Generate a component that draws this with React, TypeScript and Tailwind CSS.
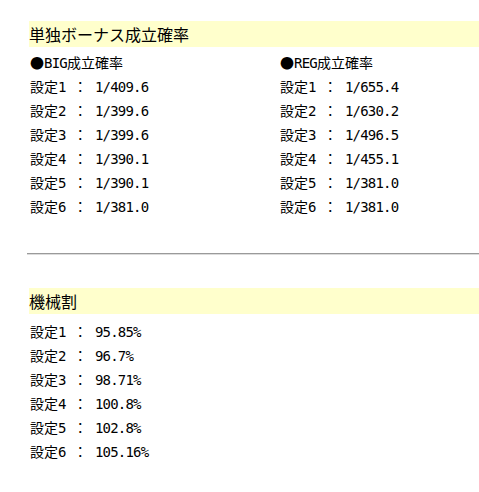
const bigRates = ["1/409.6", "1/399.6", "1/399.6", "1/390.1", "1/390.1", "1/381.0"];
const regRates = ["1/655.4", "1/630.2", "1/496.5", "1/455.1", "1/381.0", "1/381.0"];
const payouts = ["95.85%", "96.7%", "98.71%", "100.8%", "102.8%", "105.16%"];

// ascii runs get a narrow monospace, everything else the CJK face
function Txt({ s }: { s: string }) {
  const runs = s.match(/[\x00-\x7f]+|[^\x00-\x7f]+/g) ?? [];
  return (
    <div className="h-[24px] whitespace-nowrap">
      {runs.map((r, i) =>
        /^[\x00-\x7f]+$/.test(r) ? (
          <span key={i} className="font-['DejaVu_Sans_Mono'] tracking-[-0.8px] whitespace-pre">
            {r}
          </span>
        ) : (
          <span key={i}>{r}</span>
        )
      )}
    </div>
  );
}

function RateList({ title, values, className }: { title: string; values: string[]; className?: string }) {
  return (
    <div className={className}>
      <Txt s={title} />
      {values.map((v, i) => (
        <Txt key={i} s={`設定${i + 1} ： ${v}`} />
      ))}
    </div>
  );
}

export default function App() {
  return (
    <div className="min-h-[492px] bg-white pl-[29px] pt-[21px] text-black font-['Noto_Sans_CJK_JP',sans-serif]">
      <h2 className="h-[26px] bg-[#ffffcc] text-[16px] leading-[26px] font-normal">
        単独ボーナス成立確率
      </h2>
      <div className="mt-[3px] flex pl-[1px] text-[14px] leading-[24px]">
        <RateList className="w-[250px] shrink-0" title="●BIG成立確率" values={bigRates} />
        <RateList title="●REG成立確率" values={regRates} />
      </div>

      <div className="-ml-[2px] mt-[35px] h-[2px] border-t border-b border-t-[#9a9a9a] border-b-[#dcdcdc]" />

      <h2 className="mt-[33px] h-[26px] bg-[#ffffcc] text-[16px] leading-[26px] font-normal">
        機械割
      </h2>
      <div className="mt-[5px] pl-[1px] text-[14px] leading-[24px]">
        {payouts.map((v, i) => (
          <Txt key={i} s={`設定${i + 1} ： ${v}`} />
        ))}
      </div>
    </div>
  );
}
